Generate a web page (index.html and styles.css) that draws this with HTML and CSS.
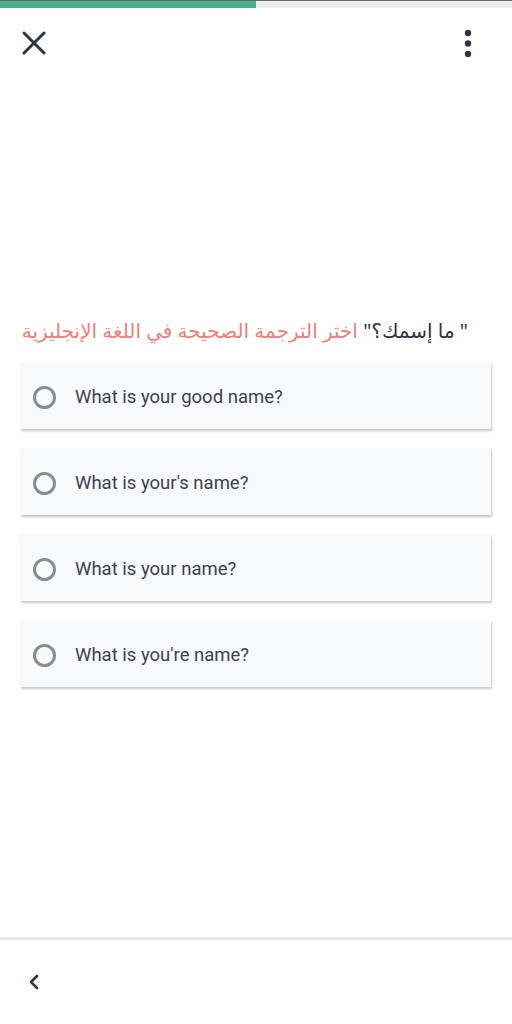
FILE: index.html
```html
<!DOCTYPE html>
<html lang="ar">
<head>
<meta charset="utf-8">
<link rel="stylesheet" href="styles.css">
</head>
<body>
<div class="page">
  <div class="progress"><div class="progress-fill"></div></div>
  <header class="topbar">
    <button class="icon-btn close">
      <svg width="24" height="24" viewBox="0 0 24 24"><path d="M2 2 L22 22 M22 2 L2 22" stroke="#2f3442" stroke-width="3" stroke-linecap="round" fill="none"/></svg>
    </button>
    <button class="icon-btn more">
      <svg width="10" height="28" viewBox="0 0 10 28"><circle cx="5" cy="4" r="3.2" fill="#2f3442"/><circle cx="5" cy="14.5" r="3.2" fill="#2f3442"/><circle cx="5" cy="25" r="3.2" fill="#2f3442"/></svg>
    </button>
  </header>
  <main class="content">
    <p class="question" dir="rtl"><span class="q-word">" ما إسمك؟"</span> <span class="q-inst">اختر الترجمة الصحيحة في اللغة الإنجليزية</span></p>
    <div class="options">
      <label class="option"><span class="radio"></span><span class="opt-text">What is your good name?</span></label>
      <label class="option"><span class="radio"></span><span class="opt-text">What is your's name?</span></label>
      <label class="option"><span class="radio"></span><span class="opt-text">What is your name?</span></label>
      <label class="option"><span class="radio"></span><span class="opt-text">What is you're name?</span></label>
    </div>
  </main>
  <footer class="bottombar">
    <button class="icon-btn back">
      <svg width="12" height="16" viewBox="0 0 12 16"><path d="M9 2 L3 8 L9 14" stroke="#2f3442" stroke-width="2.6" stroke-linecap="round" stroke-linejoin="round" fill="none"/></svg>
    </button>
  </footer>
</div>
</body>
</html>
```
FILE: styles.css
```css
* { box-sizing: border-box; }
html, body { margin: 0; padding: 0; background: #fff; }
body { font-family: Roboto, "Noto Sans", "Liberation Sans", sans-serif; }
.page {
  width: 512px;
  height: 1024px;
  display: flex;
  flex-direction: column;
}
.progress {
  height: 8px;
  background: #ececec;
  border-top: 1px solid #666;
  display: flex;
}
.progress-fill {
  width: 256px;
  background: #44b08f;
}
.topbar {
  display: flex;
  justify-content: space-between;
  align-items: flex-start;
  padding: 22px 39px 0 22px;
  height: 60px;
}
.icon-btn {
  background: none;
  border: 0;
  padding: 0;
  display: flex;
  cursor: pointer;
}
.close { margin-top: 1px; }
.more { margin-top: -1px; }
.content {
  flex: 1;
  padding: 249px 20px 0 20px;
}
.question {
  margin: 0 0 17px 0;
  padding-right: 24px;
  font-family: "Noto Sans", "DejaVu Sans", sans-serif;
  font-size: 20px;
  line-height: 28px;
  text-align: right;
  white-space: nowrap;
}
.q-word { color: #2f3442; }
.q-inst { color: #f07f7c; }
.options {
  display: flex;
  flex-direction: column;
  gap: 19px;
}
.option {
  display: flex;
  align-items: center;
  height: 67px;
  width: 471px;
  background: #f8f9fa;
  box-shadow: 1px 1.5px 2px rgba(0,0,0,0.22);
  padding-left: 13px;
  padding-top: 4px;
}
.radio {
  width: 23px;
  height: 23px;
  border: 3px solid #8c8c8c;
  border-radius: 50%;
  flex: none;
}
.opt-text {
  margin-left: 19px;
  font-size: 18.5px;
  color: #3b4250;
  margin-top: -2px;
}
.bottombar {
  height: 87px;
  border-top: 3px solid #e8e8e8;
  display: flex;
  align-items: center;
  padding-left: 28px;
}
```
